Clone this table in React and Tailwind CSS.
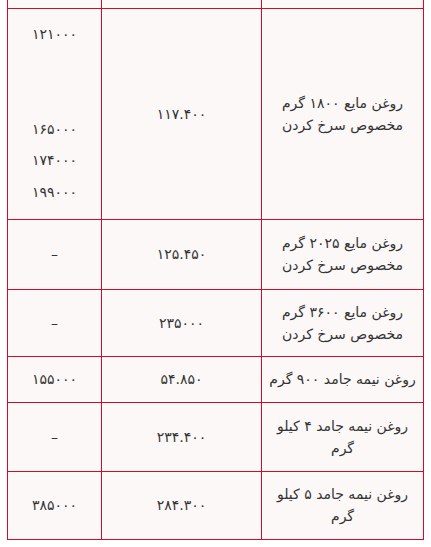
const rows = [
  {
    name: "روغن مایع ۱۸۰۰ گرم مخصوص سرخ کردن",
    price: "۱۱۷.۴۰۰",
    old: ["۱۲۱۰۰۰", "", "", "۱۶۵۰۰۰", "۱۷۴۰۰۰", "۱۹۹۰۰۰"],
    h: "h-[211px]",
  },
  { name: "روغن مایع ۲۰۲۵ گرم مخصوص سرخ کردن", price: "۱۲۵.۴۵۰", old: ["–"], h: "h-[70px]" },
  { name: "روغن مایع ۳۶۰۰ گرم مخصوص سرخ کردن", price: "۲۳۵۰۰۰", old: ["–"], h: "h-[67px]" },
  { name: "روغن نیمه جامد ۹۰۰ گرم", price: "۵۴.۸۵۰", old: ["۱۵۵۰۰۰"], h: "h-[46px]" },
  { name: "روغن نیمه جامد ۴ کیلو گرم", price: "۲۳۴.۴۰۰", old: ["–"], h: "h-[69px]" },
  { name: "روغن نیمه جامد ۵ کیلو گرم", price: "۲۸۴.۳۰۰", old: ["۳۸۵۰۰۰"], h: "h-[68px]" },
];

const cell = "border border-[#c8102e] text-center align-middle px-[4px]";

const App = () => {
  return (
    <div className="bg-white w-[431px] h-[547px] pl-[7px] overflow-hidden">
      <table
        dir="rtl"
        className="table-fixed border-collapse w-[416px] bg-[#fcf8f8] text-[#333] text-[14px] leading-[22px]"
        style={{ fontFamily: '"DejaVu Sans", "Liberation Sans", sans-serif' }}
      >
        <colgroup>
          <col className="w-[162px]" />
          <col className="w-[160px]" />
          <col className="w-[94px]" />
        </colgroup>
        <tbody>
          <tr className="h-[8px]">
            <td className={cell + " border-t-0 p-0"}></td>
            <td className={cell + " border-t-0 p-0"}></td>
            <td className={cell + " border-t-0 p-0"}></td>
          </tr>
          {rows.map((row, index) => (
            <tr key={index} className={row.h}>
              <td className={cell}>{row.name}</td>
              <td className={cell}>{row.price}</td>
              <td className={cell}>
                {row.old.length > 1 ? (
                  <div className="flex flex-col">
                    {row.old.map((v, i) => (
                      <div key={i} className="h-[31.5px] leading-[31.5px]">
                        {v}
                      </div>
                    ))}
                  </div>
                ) : (
                  row.old[0]
                )}
              </td>
            </tr>
          ))}
        </tbody>
      </table>
    </div>
  );
};

export default App;
